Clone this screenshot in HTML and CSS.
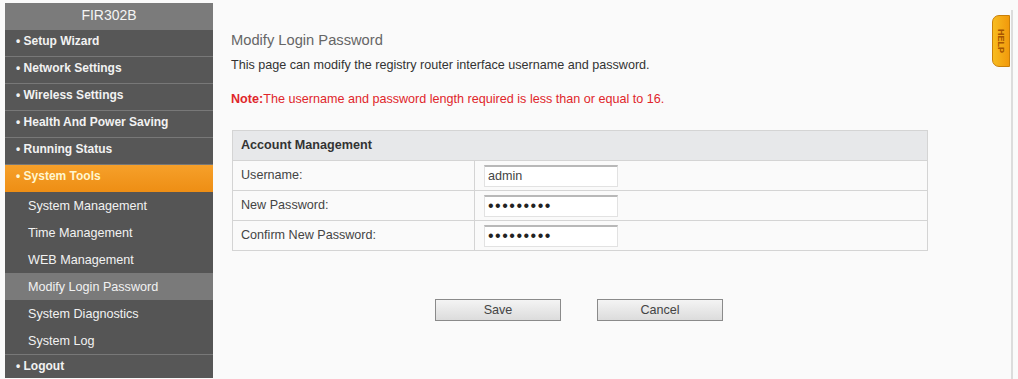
FILE: index.html
```html
<!DOCTYPE html>
<html>
<head>
<meta charset="utf-8">
<link rel="stylesheet" href="styles.css">
</head>
<body>
<div class="page">
  <nav class="sidebar">
    <div class="brand">FIR302B</div>
    <div class="item">• Setup Wizard</div>
    <div class="item">• Network Settings</div>
    <div class="item">• Wireless Settings</div>
    <div class="item">• Health And Power Saving</div>
    <div class="item">• Running Status</div>
    <div class="item active">• System Tools</div>
    <div class="sub">System Management</div>
    <div class="sub">Time Management</div>
    <div class="sub">WEB Management</div>
    <div class="sub current">Modify Login Password</div>
    <div class="sub">System Diagnostics</div>
    <div class="sub">System Log</div>
    <div class="item last">• Logout</div>
  </nav>
  <main class="main">
    <h1 class="title">Modify Login Password</h1>
    <p class="desc">This page can modify the registry router interface username and password.</p>
    <p class="note"><b>Note:</b>The username and password length required is less than or equal to 16.</p>
    <div class="panel">
      <div class="panel-head">Account Management</div>
      <div class="row">
        <div class="label">Username:</div>
        <div class="field"><input class="input" type="text" value="admin"></div>
      </div>
      <div class="row">
        <div class="label">New Password:</div>
        <div class="field"><input class="input pw" type="password" value="123456789"></div>
      </div>
      <div class="row">
        <div class="label">Confirm New Password:</div>
        <div class="field"><input class="input pw" type="password" value="123456789"></div>
      </div>
    </div>
    <div class="actions">
      <button class="btn">Save</button>
      <button class="btn">Cancel</button>
    </div>
    <div class="help">HELP</div>
  </main>
</div>
</body>
</html>
```

FILE: styles.css
```css
html, body {
  margin: 0;
  padding: 0;
  background: #fafafa;
  font-family: "Liberation Sans", Arial, sans-serif;
}
.page {
  display: flex;
  align-items: flex-start;
  height: 379px;
}
.sidebar {
  width: 208px;
  margin-left: 5px;
  margin-top: 3px;
  background: #555;
  color: #f2f2f2;
  font-size: 12px;
  flex-shrink: 0;
}
.brand {
  height: 27px;
  line-height: 24px;
  background: #7b7b7b;
  color: #f4f4f4;
  text-align: center;
  font-size: 14px;
}
.item {
  height: 26px;
  line-height: 23px;
  padding-left: 11px;
  border-bottom: 1px solid #787878;
  background: #575757;
  font-weight: bold;
}
.item.active {
  background: linear-gradient(#f6a02a, #ee8e14);
  color: #fff6d0;
  border-bottom: none;
  height: 27px;
}
.item.last {
  border-top: 1px solid #787878;
  border-bottom: none;
  height: 23px;
  line-height: 22px;
}
.sub {
  height: 27px;
  line-height: 28px;
  padding-left: 23px;
  background: #555;
  font-size: 12.6px;
}
.sub.current {
  background: #7a7a7a;
}
.main {
  position: relative;
  flex: 1;
  height: 369px;
  margin-top: 10px;
  margin-right: 5px;
  padding-left: 18px;
  border-right: 2px solid #dcdcdc;
}
.title {
  margin: 22px 0 0 0;
  font-size: 14.7px;
  font-weight: normal;
  color: #666;
}
.desc {
  margin: 10px 0 0 0;
  font-size: 12.6px;
  color: #333;
}
.note {
  margin: 20px 0 0 0;
  font-size: 12.6px;
  color: #e0262b;
}
.note b {
  font-weight: bold;
}
.panel {
  margin-top: 24px;
  margin-left: 1px;
  width: 694px;
  border: 1px solid #d4d4d4;
  background: #fafafa;
}
.panel-head {
  height: 29px;
  line-height: 28px;
  padding-left: 8px;
  background: #e7e8ea;
  font-size: 12.6px;
  font-weight: bold;
  color: #333;
}
.row {
  display: flex;
  height: 29px;
  border-top: 1px solid #d4d4d4;
}
.label {
  width: 233px;
  padding-left: 8px;
  line-height: 29px;
  font-size: 12.6px;
  color: #444;
  border-right: 1px solid #d4d4d4;
}
.field {
  display: flex;
  align-items: center;
  padding-left: 9px;
}
.input {
  width: 126px;
  height: 19px;
  padding: 0 3px;
  border: 1px solid #e2e2e2;
  border-top: 2px solid #b8b8b8;
  background: #fff;
  font-family: "Liberation Sans", Arial, sans-serif;
  font-size: 12.6px;
  color: #444;
  outline: none;
}
.input.pw {
  font-size: 16px;
  letter-spacing: 1.5px;
  color: #222;
}
.actions {
  display: flex;
  gap: 36px;
  margin-top: 48px;
  margin-left: 204px;
}
.btn {
  width: 126px;
  height: 22px;
  border: 1px solid #8a8a8a;
  background: linear-gradient(#f4f4f4, #dcdcdc);
  font-family: "Liberation Sans", Arial, sans-serif;
  font-size: 12.6px;
  color: #444;
  padding: 0;
}
.help {
  position: absolute;
  top: 5px;
  right: 1px;
  width: 16px;
  height: 50px;
  border-radius: 7px 0 0 7px;
  background: linear-gradient(90deg, #f8bc20, #f29a0c);
  border: 1px solid #c9800a;
  color: #a85400;
  font-size: 9px;
  font-weight: bold;
  writing-mode: vertical-rl;
  text-align: center;
  line-height: 16px;
}
```
